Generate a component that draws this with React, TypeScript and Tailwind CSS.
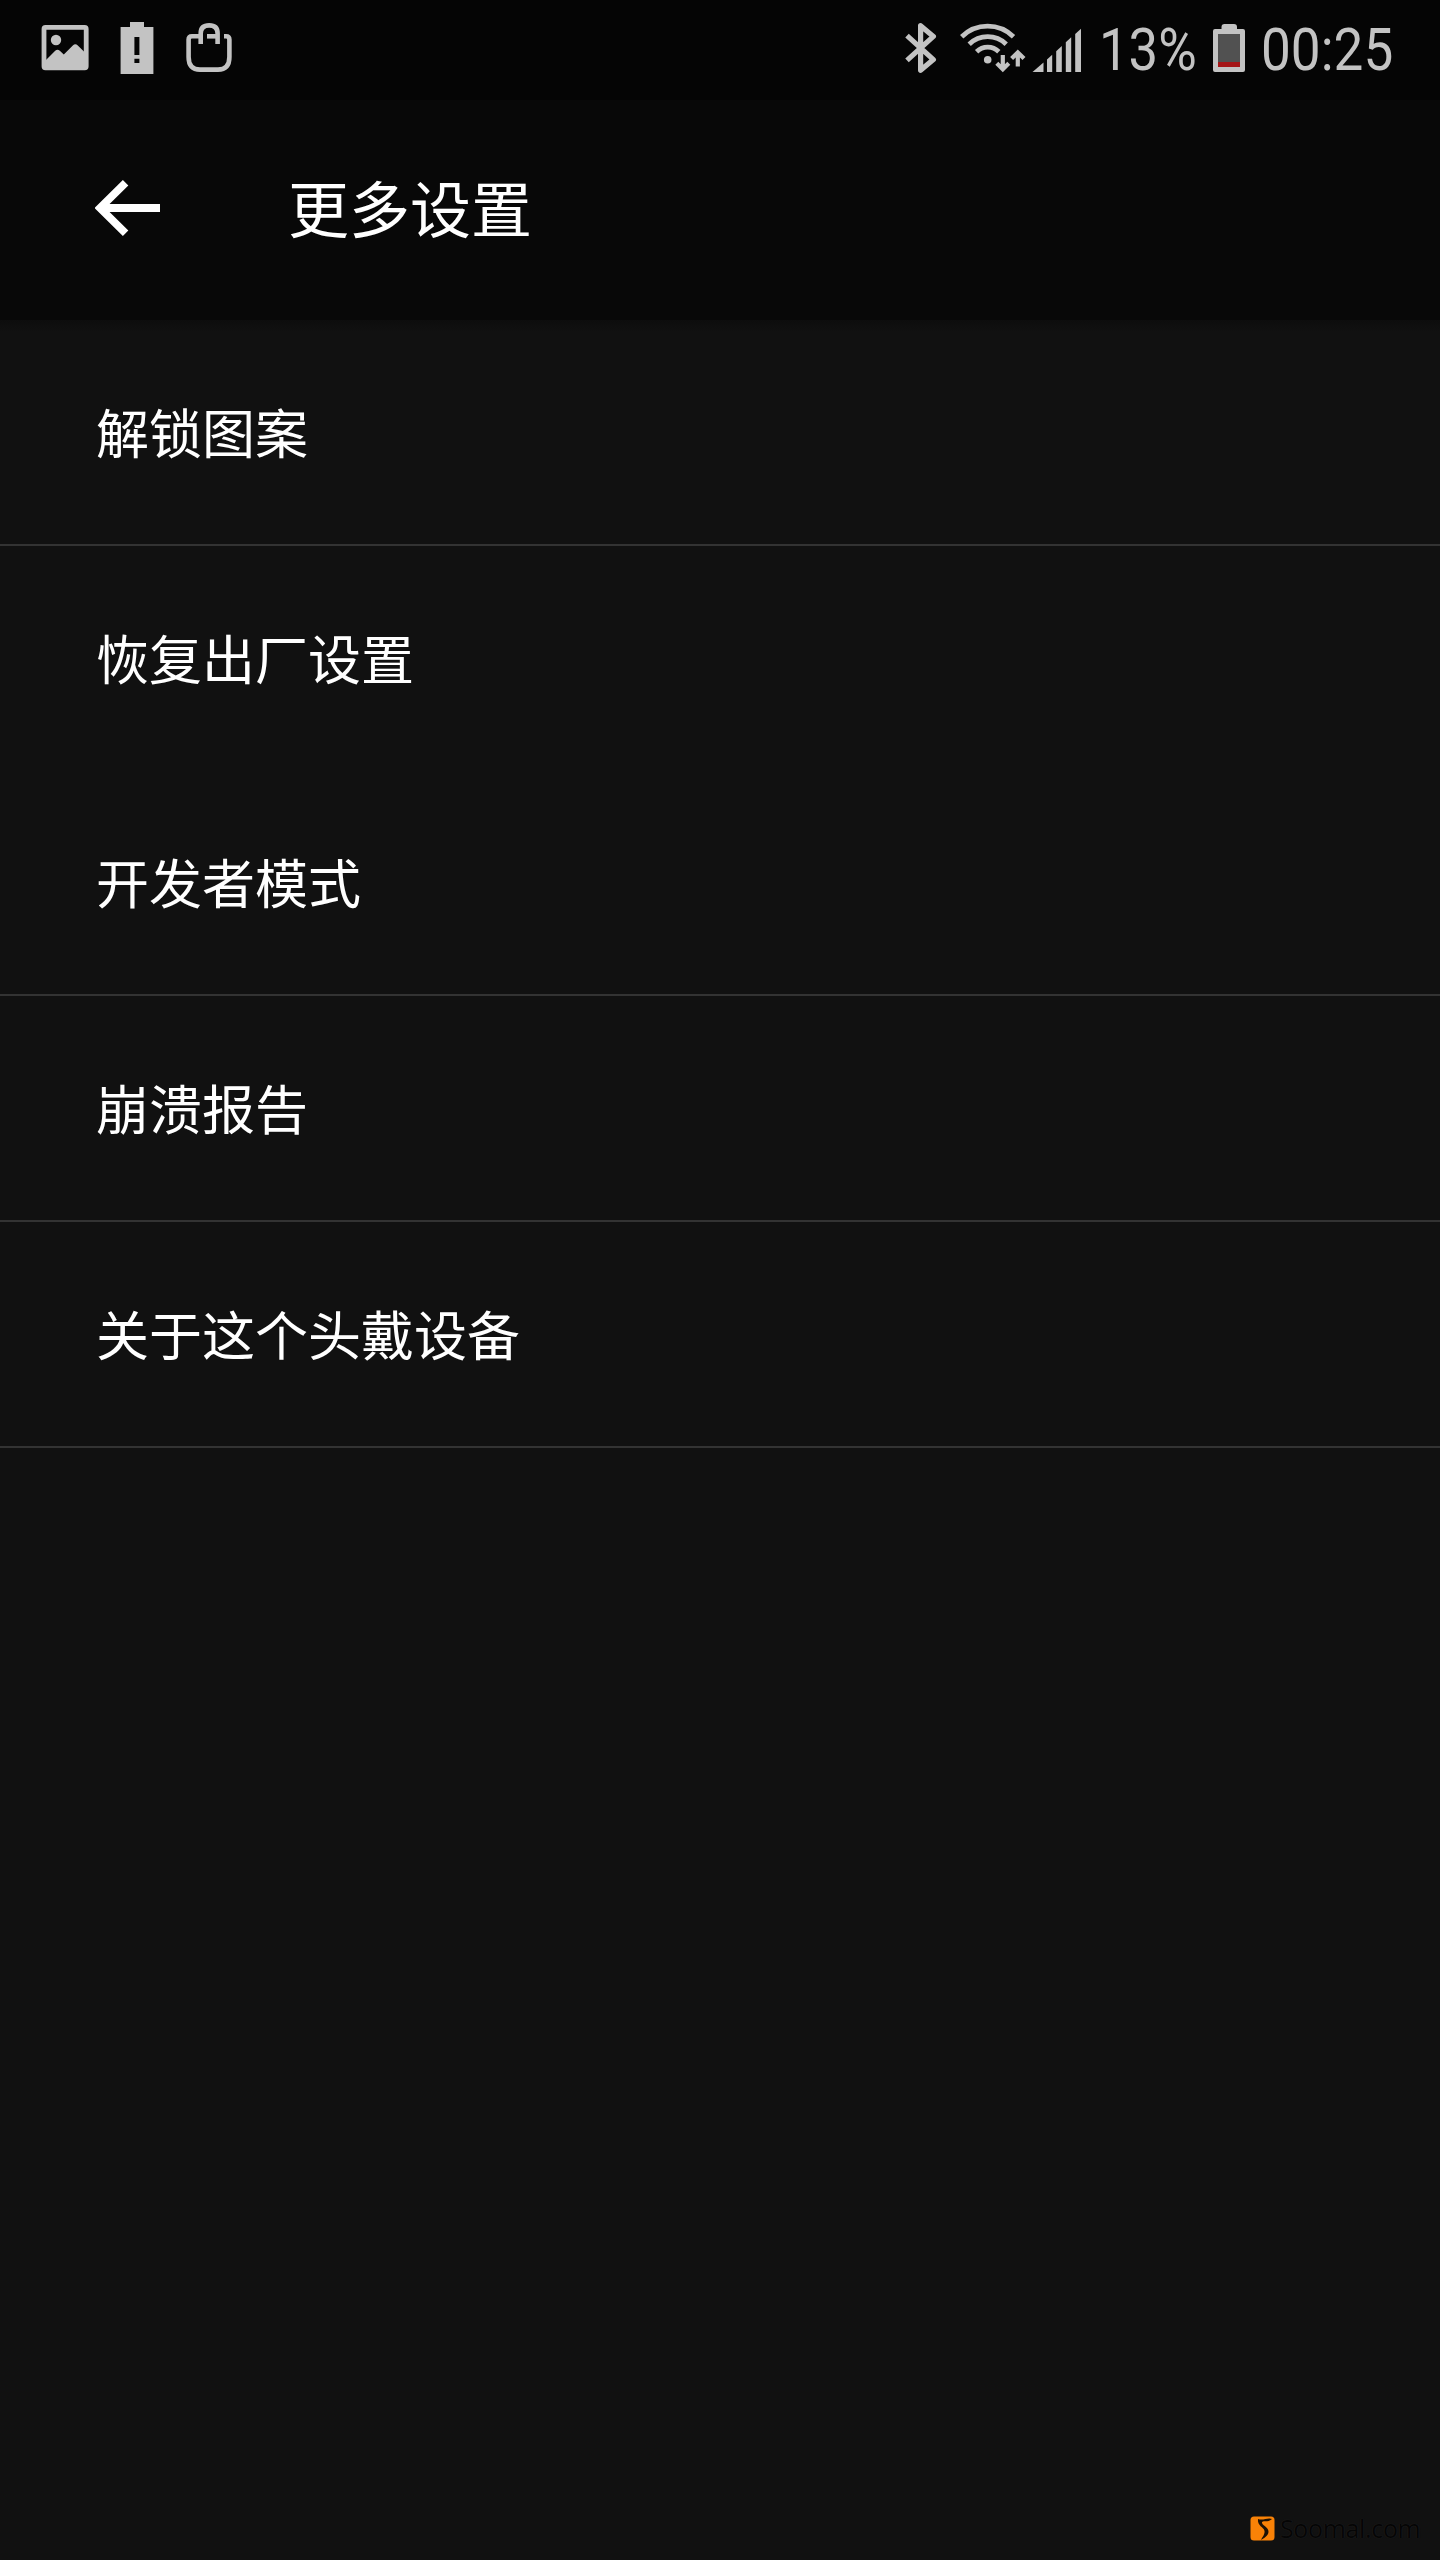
type SettingItem = {
  id: string;
  label: string;
  divider: boolean;
};

const items: SettingItem[] = [
  { id: "pattern", label: "解锁图案", divider: true },
  { id: "reset", label: "恢复出厂设置", divider: false },
  { id: "developer", label: "开发者模式", divider: true },
  { id: "crash", label: "崩溃报告", divider: true },
  { id: "about", label: "关于这个头戴设备", divider: true },
];

const ImageIcon = () => (
  <svg width="48" height="48" viewBox="41 24 48 48" className="shrink-0">
    <rect x="44" y="27.4" width="42.2" height="40.4" rx="1.5" fill="none" stroke="#c3c3c3" strokeWidth="4.8" />
    <circle cx="56" cy="40" r="5.2" fill="#c3c3c3" />
    <path d="M45 61 L55.2 50.8 Q57.5 48.6 59.8 50.8 L63.8 54.6 L72.8 45.4 Q75.3 43 77.8 45.4 L86 53.5 V68 H45 Z" fill="#c3c3c3" />
  </svg>
);

const BatteryAlertIcon = () => (
  <svg width="34" height="52" viewBox="120 22 34 52" className="shrink-0">
    <path
      fillRule="evenodd"
      d="M130 22 H144 V27 H153.4 V74 H120.6 V27 H130 Z M134.4 37 V55 H139.4 V37 Z M134.4 58.8 V63 H139.4 V58.8 Z"
      fill="#c3c3c3"
    />
  </svg>
);

const BagIcon = () => (
  <svg width="48" height="52" viewBox="185 22 48 52" className="shrink-0" fill="none" stroke="#c3c3c3" strokeWidth="4.6">
    <path d="M203 36.3 H192 Q188.6 36.3 188.6 39.6 V57 Q188.6 69.6 200 69.6 H218 Q229.4 69.6 229.4 57 V39.6 Q229.4 36.3 226 36.3 H224" />
    <path d="M200.7 44 V33.5 Q200.7 25.4 209.2 25.4 Q217.6 25.4 217.6 33.5 V44" />
    <path d="M207 36.3 H216" />
  </svg>
);

const BluetoothIcon = () => (
  <svg
    width="34"
    height="52"
    viewBox="904 22 34 52"
    className="shrink-0"
    fill="none"
    stroke="#c3c3c3"
    strokeWidth="5.2"
    strokeLinejoin="round"
  >
    <path d="M907 35.6 L933.4 59.6 L920.6 70.3 V25.7 L933.4 36.4 L907 60.4" />
  </svg>
);

const WifiIcon = () => (
  <svg width="66" height="52" viewBox="960 22 66 52" className="shrink-0" fill="none" stroke="#c3c3c3">
    <path d="M961.7 36.7 A37 37 0 0 1 1013.5 36.7" strokeWidth="4.8" />
    <path d="M969.2 44.2 A26.5 26.5 0 0 1 1006.2 44.2" strokeWidth="4.8" />
    <path d="M976.6 51.7 A16 16 0 0 1 998.8 51.7" strokeWidth="4.8" />
    <circle cx="987.7" cy="59.8" r="3.8" fill="#c3c3c3" stroke="none" />
    <path d="M1002.8 55 V68 M996.8 63.2 L1002.8 69.2 L1008.8 63.2" strokeWidth="4.2" />
    <path d="M1017.8 66.5 V53 M1011.6 58.6 L1017.8 52.4 L1024 58.6" strokeWidth="4.2" />
  </svg>
);

const SignalIcon = () => (
  <svg width="50" height="46" viewBox="1032 28 50 46" className="shrink-0" fill="#c3c3c3">
    <path d="M1032.5 72 L1043.5 62.5 V72 Z" />
    <path d="M1047 72 V59.4 L1052.2 54.8 V72 Z" />
    <path d="M1056.2 72 V51.2 L1061.8 46 V72 Z" />
    <path d="M1065.8 72 V42.3 L1071.2 37.2 V72 Z" />
    <path d="M1075.2 72 V34 L1081 28.8 V72 Z" />
  </svg>
);

const BatteryIcon = () => (
  <svg width="32" height="48" viewBox="1213 24 32 48" className="shrink-0">
    <path d="M1221.5 29 V27 Q1221.5 24 1224.5 24 H1234 Q1237 24 1237 27 V29 H1243 Q1245 29 1245 31 V70 Q1245 72 1243 72 H1215 Q1213 72 1213 70 V31 Q1213 29 1215 29 Z" fill="#c3c3c3" />
    <rect x="1218" y="34" width="22" height="28.5" fill="#515151" />
    <rect x="1218" y="62" width="22" height="5" fill="#a51517" />
  </svg>
);

const BackIcon = () => (
  <svg width="66" height="58" viewBox="95 179 66 58" className="shrink-0" fill="none" stroke="#ffffff" strokeWidth="7.8">
    <path d="M125.6 182.8 L100 208 L125.6 233.2 M100 208 H160" />
  </svg>
);

const StatusBar = () => (
  <div className="flex h-[100px] items-start bg-[#050505] pl-[41px] font-[Roboto,'Noto_Sans_CJK_SC',sans-serif] text-[60px] leading-[70px] text-[#c3c3c3]">
    <div className="flex pt-[22px]">
      <div className="mt-0.5">
        <ImageIcon />
      </div>
      <div className="ml-[31px]">
        <BatteryAlertIcon />
      </div>
      <div className="ml-[31px]">
        <BagIcon />
      </div>
    </div>
    <div className="ml-[671px] flex pt-[22px]">
      <BluetoothIcon />
      <div className="ml-[22px]">
        <WifiIcon />
      </div>
      <div className="ml-1.5 mt-1.5">
        <SignalIcon />
      </div>
    </div>
    <span className="ml-[17px] mt-[15px] w-[114px] origin-left scale-x-[0.877] whitespace-nowrap">13%</span>
    <div className="mt-6">
      <BatteryIcon />
    </div>
    <span className="ml-4 mt-[15px] origin-left scale-x-[0.885] whitespace-nowrap">00:25</span>
  </div>
);

const Watermark = () => (
  <div className="mr-[19px] mt-auto mb-[14px] flex items-center self-end">
    <svg width="25" height="25" viewBox="0 0 25 25" className="mr-[5px]">
      <rect x="0.5" y="0.5" width="24" height="24" rx="3.5" fill="#f98207" />
      <path
        d="M8 3 C13 5 18 1 22 3 C17 7 14 4 12 6 C11 9 19 11 18.5 16 C18 20 14 22 11 24 C13 20 15 18 14.5 15 C14 11 7 10 8 3 Z"
        fill="#1c1206"
      />
    </svg>
    <span className="w-[141px] whitespace-nowrap font-['Open_Sans',sans-serif] text-[25px] leading-[36px] tracking-[-0.35px] text-[#050505] [text-shadow:0_0_1px_#2a2a2a]">
      Soomal.com
    </span>
  </div>
);

export default function App() {
  return (
    <div className="flex h-[2560px] w-[1440px] flex-col overflow-hidden bg-[#111111] font-[Roboto,'Noto_Sans_CJK_SC',sans-serif] text-white">
      <StatusBar />
      <header className="flex h-[220px] items-start bg-[#080808] pl-[95px]">
        <button type="button" aria-label="返回" className="mt-[79px]">
          <BackIcon />
        </button>
        <h1 className="ml-[127px] mt-[68px] text-[61px] leading-[88px]">更多设置</h1>
      </header>
      <div className="h-3 bg-linear-to-b from-[#0d0d0d] to-[#111111]" />
      <ul className="-mt-3">
        {items.map((item) => (
          <li
            key={item.id}
            className={`flex items-center pl-[96px] pt-2 text-[53px] leading-[76px] ${
              item.divider ? "h-[226px] border-b-2 border-[#333333]" : "h-[224px]"
            }`}
          >
            {item.label}
          </li>
        ))}
      </ul>
      <Watermark />
    </div>
  );
}
